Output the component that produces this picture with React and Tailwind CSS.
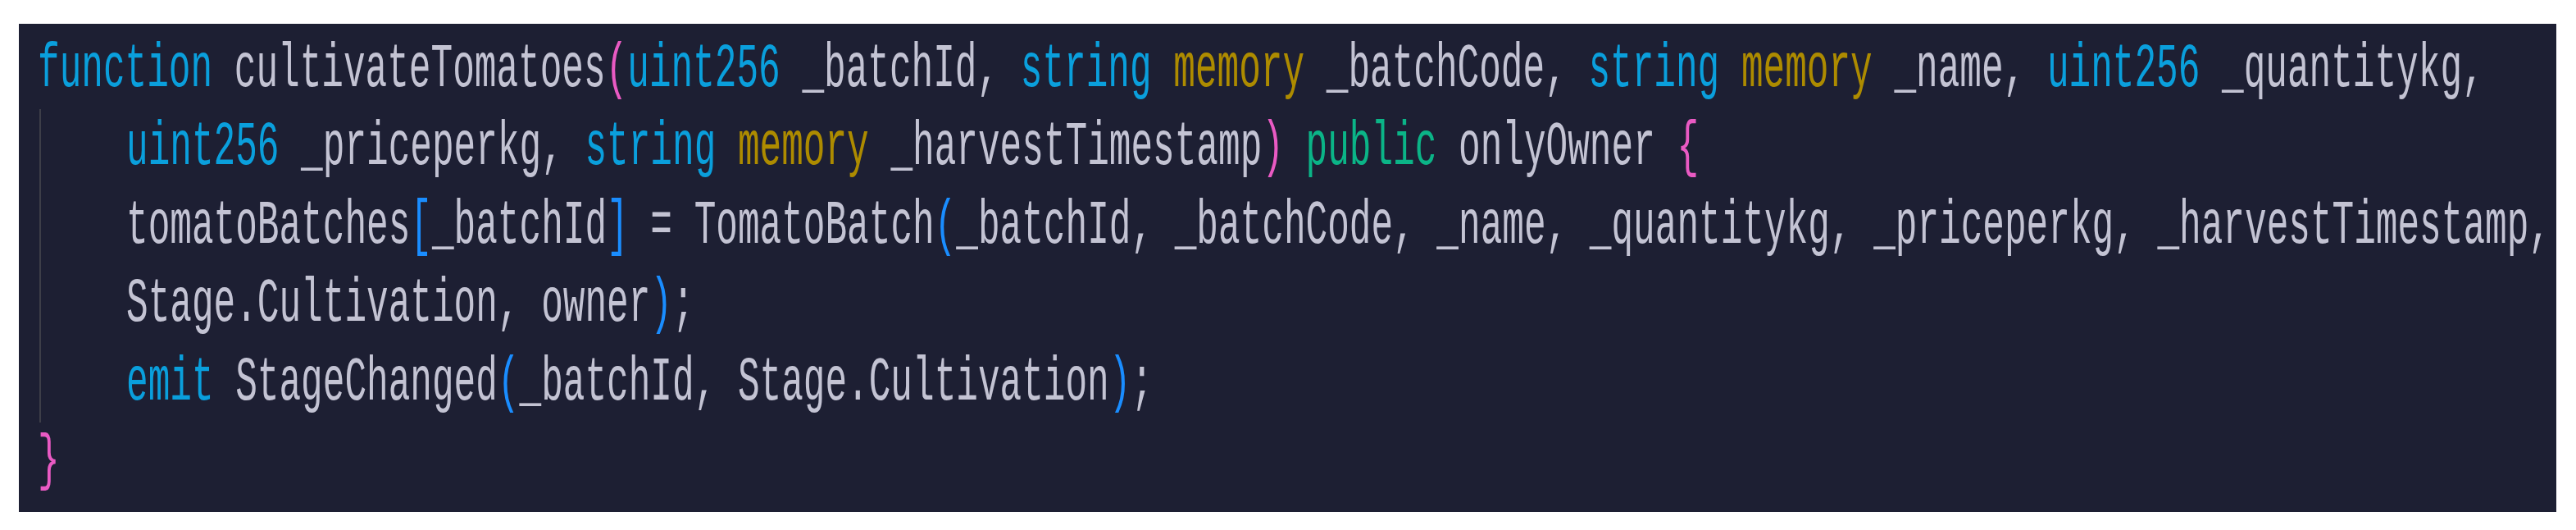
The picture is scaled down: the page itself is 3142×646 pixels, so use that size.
import React from "react";

// token colours
const K = "text-[#0a9fdc]"; // keyword / type
const M = "text-[#ad8b00]"; // storage location
const G = "text-[#0bb487]"; // visibility
const P = "text-[#e95ac3]"; // outer brackets
const B = "text-[#1a8dff]"; // inner brackets

const Line = ({ children }) => (
  <div className="h-[95.5px] flex items-center">
    <span className="inline-block whitespace-pre leading-none scale-y-[1.72]">
      {children}
    </span>
  </div>
);

const App = () => {
  return (
    <div className="bg-white h-[646px] pt-[29px] pl-[23px]">
      <div className="w-[3095px] h-[595px] bg-[#1d1f33] pl-[23px] pt-[8px] font-['Liberation_Mono',monospace] text-[44.4px] text-[#c3c3d3]">
        <Line>
          <span className={K}>function</span> cultivateTomatoes
          <span className={P}>(</span>
          <span className={K}>uint256</span> _batchId,{" "}
          <span className={K}>string</span> <span className={M}>memory</span>{" "}
          _batchCode, <span className={K}>string</span>{" "}
          <span className={M}>memory</span> _name,{" "}
          <span className={K}>uint256</span> _quantitykg,
        </Line>

        {/* indented body with guide */}
        <div className="ml-[2px] border-l-2 border-[#3d3e48] pl-[104px]">
          <Line>
            <span className={K}>uint256</span> _priceperkg,{" "}
            <span className={K}>string</span> <span className={M}>memory</span>{" "}
            _harvestTimestamp<span className={P}>)</span>{" "}
            <span className={G}>public</span> onlyOwner{" "}
            <span className={P}>{"{"}</span>
          </Line>
          <Line>
            tomatoBatches<span className={B}>[</span>_batchId
            <span className={B}>]</span> = TomatoBatch
            <span className={B}>(</span>_batchId, _batchCode, _name,
            _quantitykg, _priceperkg, _harvestTimestamp,
          </Line>
          <Line>
            Stage.Cultivation, owner<span className={B}>)</span>;
          </Line>
          <Line>
            <span className={K}>emit</span> StageChanged
            <span className={B}>(</span>_batchId, Stage.Cultivation
            <span className={B}>)</span>;
          </Line>
        </div>

        <Line>
          <span className={P}>{"}"}</span>
        </Line>
      </div>
    </div>
  );
};

export default App;
